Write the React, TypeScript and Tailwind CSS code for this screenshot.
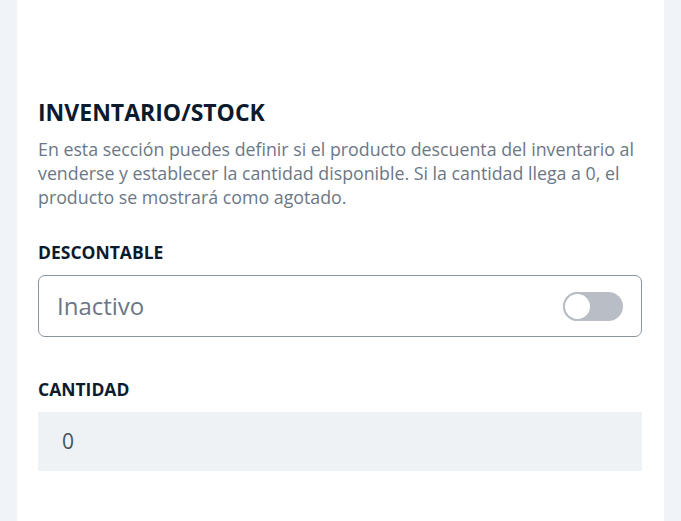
export default function App() {
  return (
    <div className="min-h-[521px] bg-[#f0f4f8] px-[17px] font-['Open_Sans',sans-serif]">
      <div className="min-h-[521px] bg-white pl-[21px] pr-[22px] pt-[97px] pb-[50px]">
        <h2 className="text-[23px] font-bold leading-[30px] text-[#0c1a2e]">INVENTARIO/STOCK</h2>
        <p className="mt-[10px] text-[17.8px] leading-[24px] text-[#6b7785]">
          En esta sección puedes definir si el producto descuenta del inventario al venderse y
          establecer la cantidad disponible. Si la cantidad llega a 0, el producto se mostrará como
          agotado.
        </p>

        {/* descontable */}
        <label className="mt-[31px] block text-[17.5px] font-bold leading-[24px] text-[#0c1a2e]">
          DESCONTABLE
        </label>
        <div className="mt-[11px] flex h-[62px] items-center justify-between rounded-[7px] border border-[#8a949e] pl-[18px] pr-[18px]">
          <span className="text-[24px] text-[#6b7785]">Inactivo</span>
          <div className="relative h-[29px] w-[60px] rounded-full bg-[#b9bec6]">
            <div className="absolute left-0 top-0 h-[29px] w-[29px] rounded-full border-[2px] border-[#b9bec6] bg-white" />
          </div>
        </div>

        {/* cantidad */}
        <label className="mt-[40px] block text-[17.5px] font-bold leading-[24px] text-[#0c1a2e]">
          CANTIDAD
        </label>
        <div className="mt-[11px] flex h-[59px] items-center bg-[#eef2f5] px-[24px] text-[21px] text-[#46525e]">
          0
        </div>
      </div>
    </div>
  );
}
